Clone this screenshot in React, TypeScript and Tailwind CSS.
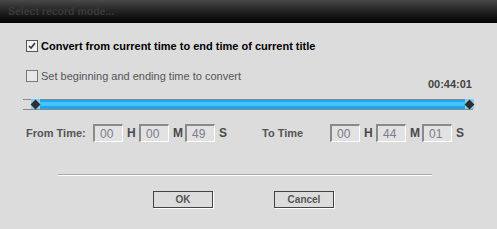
import React from 'react';

const font = { fontFamily: '"Liberation Sans", Arial, sans-serif' };

function TimeBox({ value }: { value: string }) {
  return (
    <div className="w-[30px] h-[18px] bg-[#e2e2e2] border-t-2 border-l-2 border-[#8a8a8a] border-r border-b border-r-white border-b-white flex items-center pl-[5px] text-[12px] text-[#7c7c8c] leading-none">
      {value}
    </div>
  );
}

function Unit({ u }: { u: string }) {
  return <span className="w-[12px] ml-[4px] text-[12px] font-bold text-[#4a4a4a] leading-none">{u}</span>;
}

function Handle() {
  return (
    <div className="w-[9px] h-[10px] bg-[#7fd0ff] flex items-center justify-center">
      <div className="w-[7px] h-[7px] bg-[#2e2e2e] rotate-45" />
    </div>
  );
}

function DlgButton({ label }: { label: string }) {
  return (
    <button className="w-[60px] h-[17px] border border-[#444] shadow-[1px_1px_0_#fff] flex items-center justify-center text-[10px] font-bold text-[#555] leading-none">
      {label}
    </button>
  );
}

export default function App() {
  return (
    <div className="w-[497px] h-[229px] bg-[#dcdcdc] flex flex-col overflow-hidden" style={font}>
      <div className="h-[23px] bg-gradient-to-b from-[#484848] to-[#040404] flex items-center pl-[8px]">
        <span className="text-[10.5px] font-bold text-[#3a3a3a] leading-none">Select record mode...</span>
      </div>

      <div className="flex items-center mt-[17px] ml-[26px] h-[12px]">
        <div className="w-[12px] h-[12px] border border-[#555] bg-[#f2f2f2] flex items-center justify-center">
          <svg width="8" height="8" viewBox="0 0 8 8">
            <path d="M1 4 L3 6 L7 1" stroke="#333" strokeWidth="1.6" fill="none" />
          </svg>
        </div>
        <span className="ml-[3px] text-[11px] font-bold text-black leading-none">
          Convert from current time to end time of current title
        </span>
      </div>

      <div className="flex items-center mt-[18px] ml-[26px] h-[12px]">
        <div className="w-[12px] h-[12px] border border-[#777] bg-[#e8e8e8]" />
        <span className="ml-[3px] text-[11px] text-[#555] leading-none">Set beginning and ending time to convert</span>
      </div>

      <div className="flex justify-end pr-[25px] mt-[-3px] h-[12px]">
        <span className="text-[11px] font-bold text-[#444] leading-none">00:44:01</span>
      </div>

      <div className="ml-[23px] w-[450px] mt-[8px] border-t border-b border-[#8a8a8a] h-[11px] flex items-center">
        <div className="w-[9px]" />
        <div className="flex-1 h-[9px] flex items-center relative bg-[#1ea6ee]">
          <div className="absolute left-0 right-0 top-[2px] h-[4px] bg-[#48c2fa]" />
          <div className="absolute left-[-1px] top-[-1px]"><Handle /></div>
          <div className="absolute right-[-1px] top-[-1px]"><Handle /></div>
        </div>
      </div>

      <div className="flex items-center mt-[14px] h-[18px]">
        <span className="ml-[26px] w-[67px] text-[11px] font-bold text-[#555] leading-none">From Time:</span>
        <TimeBox value="00" />
        <Unit u="H" />
        <TimeBox value="00" />
        <Unit u="M" />
        <TimeBox value="49" />
        <Unit u="S" />
        <span className="ml-[31px] w-[68px] text-[11px] font-bold text-[#555] leading-none">To Time</span>
        <TimeBox value="00" />
        <Unit u="H" />
        <TimeBox value="44" />
        <Unit u="M" />
        <TimeBox value="01" />
        <Unit u="S" />
      </div>

      <div className="ml-[58px] w-[374px] mt-[32px] h-[2px] border-t border-[#aaaaaa] border-b border-b-white" />

      <div className="flex mt-[15px] ml-[153px] gap-[61px]">
        <DlgButton label="OK" />
        <DlgButton label="Cancel" />
      </div>
    </div>
  );
}
